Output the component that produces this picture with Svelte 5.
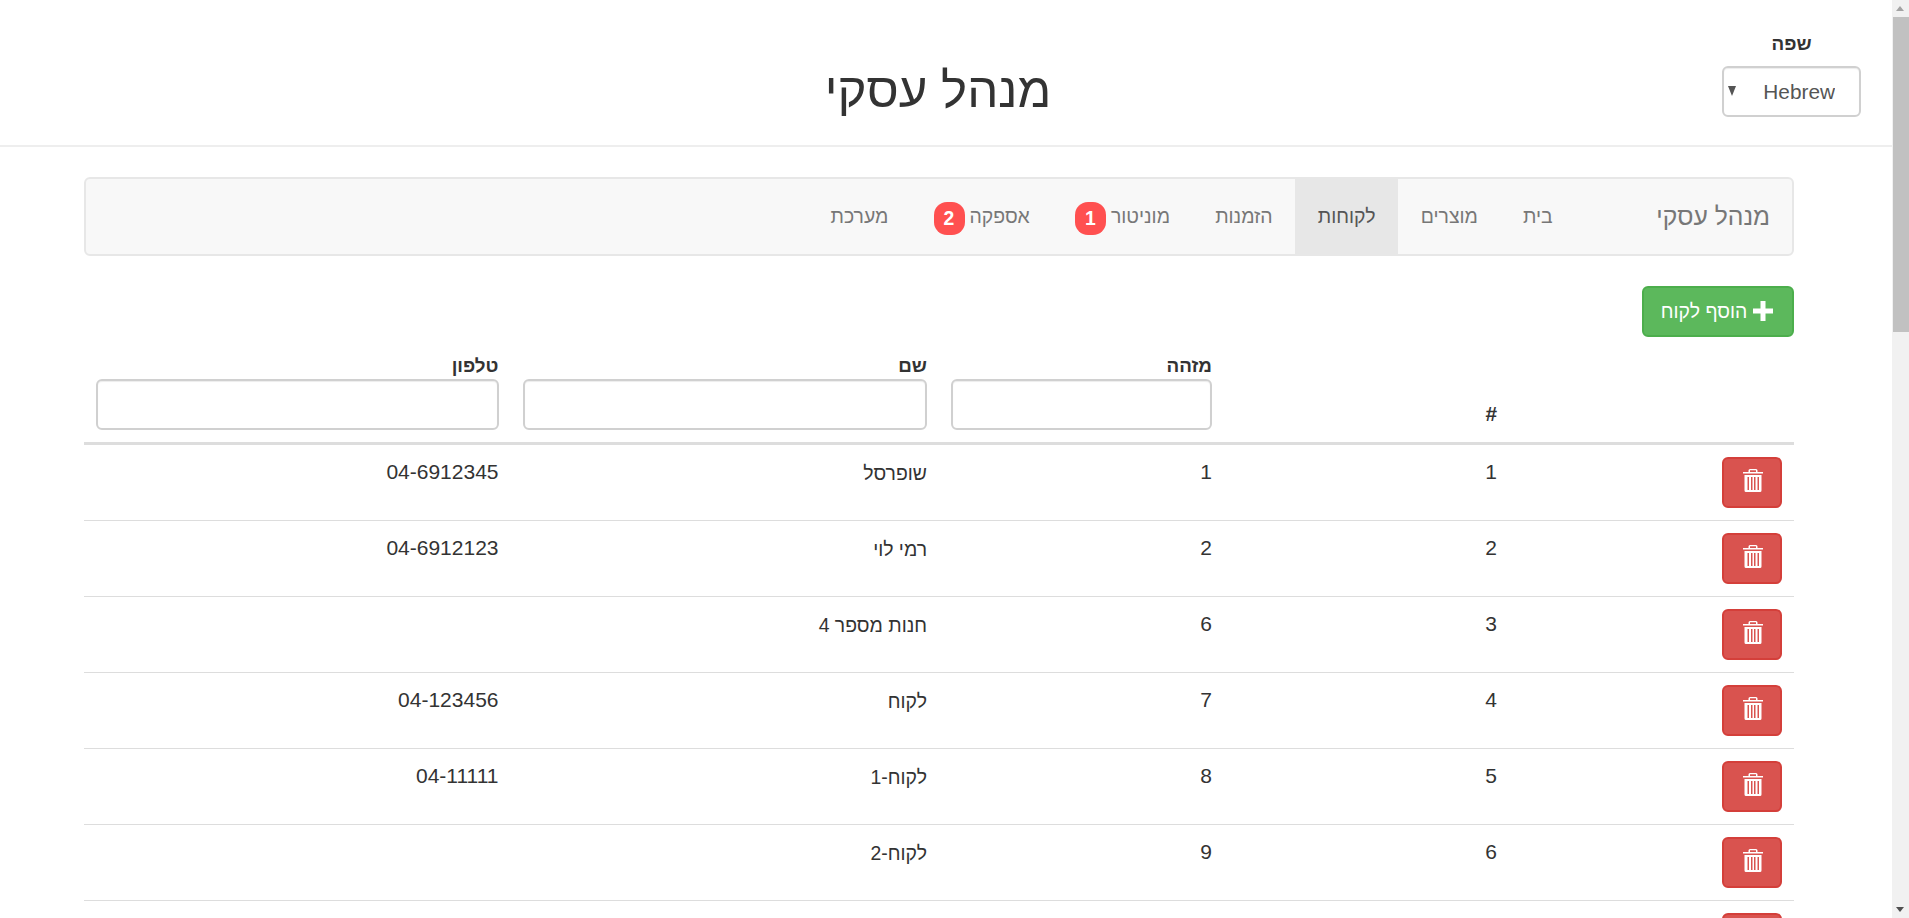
<script>
  const navItems = [
    { label: 'בית' },
    { label: 'מוצרים' },
    { label: 'לקוחות', active: true },
    { label: 'הזמנות' },
    { label: 'מוניטור', badge: 1 },
    { label: 'אספקה', badge: 2 },
    { label: 'מערכת' }
  ];
  const rows = [
    { n: 1, id: 1, name: 'שופרסל', phone: '04-6912345' },
    { n: 2, id: 2, name: 'רמי לוי', phone: '04-6912123' },
    { n: 3, id: 6, name: 'חנות מספר 4', phone: '' },
    { n: 4, id: 7, name: 'לקוח', phone: '04-123456' },
    { n: 5, id: 8, name: 'לקוח-1', phone: '04-11111' },
    { n: 6, id: 9, name: 'לקוח-2', phone: '' },
    { n: '', id: '', name: '', phone: '' }
  ];
</script>

<div class="page">
  <header class="top">
    <div class="lang">
      <label for="lang-select">שפה</label>
      <div class="select-wrap">
        <select id="lang-select"><option>Hebrew</option></select>
        <span class="arrow"></span>
      </div>
    </div>
    <h1>מנהל עסקי</h1>
  </header>

  <main class="container">
    <nav class="navbar">
      <a class="brand" href="#top">מנהל עסקי</a>
      <ul>
        {#each navItems as item}
          <li class:active={item.active}>
            <a href="#top">{item.label}{#if item.badge}<span class="badge">{item.badge}</span>{/if}</a>
          </li>
        {/each}
      </ul>
    </nav>

    <button class="btn add">
      <svg class="plus" viewBox="0 0 20 20" width="20" height="20" aria-hidden="true">
        <path d="M7.5 0h5v7.5H20v5h-7.5V20h-5v-7.5H0v-5h7.5z" fill="#fff" />
      </svg>
      הוסף לקוח
    </button>

    <table>
      <colgroup>
        <col class="c6" /><col class="c6" /><col class="c6" /><col class="c4a" /><col class="c4b" />
      </colgroup>
      <thead>
        <tr>
          <th></th>
          <th class="hash">#</th>
          <th><span class="th-label">מזהה</span><input aria-label="מזהה" /></th>
          <th><span class="th-label">שם</span><input aria-label="שם" /></th>
          <th><span class="th-label">טלפון</span><input aria-label="טלפון" /></th>
        </tr>
      </thead>
      <tbody>
        {#each rows as row}
          <tr>
            <td>
              <button class="btn del" aria-label="מחק">
                <svg viewBox="0 0 20 23" width="20" height="23" aria-hidden="true">
                  <path fill="#fff" fill-rule="evenodd" d="M7 0h6a1.500 1.500 0 0 1 1.500 1.500V3H20v1.600H0V3h5.500V1.500A1.500 1.500 0 0 1 7 0zM7 1.300v1.700h6V1.300zM1.500 6H18.500V21.500A1.500 1.500 0 0 1 17 23H3a1.500 1.500 0 0 1-1.500-1.500zM4.500 8v13H6V8zM8 8v13h1.500V8zM11 8v13h1.500V8zM14.500 8v13H16V8z" />
                </svg>
              </button>
            </td>
            <td>{row.n}</td>
            <td>{row.id}</td>
            <td>{row.name}</td>
            <td>{row.phone}</td>
          </tr>
        {/each}
      </tbody>
    </table>
  </main>

  <div class="scrollbar" aria-hidden="true">
    <span class="up"></span>
    <span class="thumb"></span>
    <span class="down"></span>
  </div>
</div>

<style>
  :global(body) {
    margin: 0;
    background: #fff;
    overflow: hidden;
  }
  .page {
    position: relative;
    width: 1909px;
    height: 918px;
    overflow: hidden;
    direction: rtl;
    font-family: "Liberation Sans", Arial, sans-serif;
    font-size: 19.4px;
    line-height: 1.43;
    color: #333;
    padding-right: 17px;
    box-sizing: border-box;
  }
  .top {
    display: flex;
    height: 147px;
    box-sizing: border-box;
    border-bottom: 2px solid #eee;
    padding-right: 31px;
  }
  .lang {
    width: 139px;
    padding-top: 30px;
    flex: none;
    text-align: center;
    box-sizing: border-box;
  }
  .lang label {
    display: block;
    font-weight: 700;
    font-size: 18.8px;
    height: 36px;
    line-height: 28px;
  }
  .select-wrap {
    position: relative;
    height: 51px;
  }
  select {
    appearance: none;
    -webkit-appearance: none;
    display: block;
    width: 100%;
    height: 51px;
    background: #fff;
    border: 2px solid #d0d0d0;
    border-radius: 6px;
    box-sizing: border-box;
    padding: 0 24px 0 0;
    font: inherit;
    font-size: 20.8px;
    color: #555;
    direction: rtl;
    box-shadow: inset 0 1px 1px rgba(0, 0, 0, 0.075);
  }
  .arrow {
    position: absolute;
    left: 6px;
    top: 20px;
    border-style: solid;
    border-width: 10px 4.5px 0;
    border-color: #555 transparent transparent;
  }
  h1 {
    flex: 1;
    margin: 0;
    padding: 63px 0 0 154px;
    text-align: center;
    font-size: 49.2px;
    font-weight: 500;
    line-height: 1.1;
    color: #333;
  }
  .container {
    display: block;
    width: 1710px;
    margin: 30px 98px 0 0;
  }
  .navbar {
    display: flex;
    height: 79px;
    box-sizing: border-box;
    background: #f8f8f8;
    border: 2px solid #e7e7e7;
    border-radius: 6px;
  }
  .brand {
    padding: 0 22px 0 81px;
    color: #777;
    text-decoration: none;
    font-size: 24.7px;
    line-height: 75px;
  }
  ul {
    display: flex;
    list-style: none;
    margin: 0;
    padding: 0;
  }
  li a {
    display: flex;
    align-items: center;
    gap: 5px;
    height: 75px;
    padding: 0 22.6px;
    color: #777;
    text-decoration: none;
    line-height: 75px;
  }
  li.active a {
    background: #e7e7e7;
    color: #555;
  }
  .badge {
    display: block;
    width: 31px;
    height: 33px;
    margin-top: 3px;
    border-radius: 13px;
    background: #ff5050;
    color: #fff;
    font-weight: 700;
    text-align: center;
    line-height: 33px;
  }
  .btn {
    display: flex;
    align-items: center;
    justify-content: center;
    box-sizing: border-box;
    height: 51px;
    border-radius: 6px;
    border-width: 2px;
    border-style: solid;
    color: #fff;
    font: inherit;
    padding: 0;
    direction: rtl;
  }
  .add {
    width: 152px;
    gap: 6px;
    margin-top: 30px;
    padding-right: 2px;
    background: #5cb85c;
    border-color: #4cae4c;
  }
  .plus {
    margin-top: -2px;
  }
  .del {
    width: 60px;
    background: #d9534f;
    border-color: #d43f3a;
  }
  .del svg {
    margin: -5px 0 0 2px;
  }
  table {
    width: 1710px;
    margin-top: 12px;
    table-layout: fixed;
    border-collapse: collapse;
  }
  .c6 { width: 285px; }
  .c4a { width: 428.5px; }
  .c4b { width: 426.5px; }
  th {
    padding: 0 12px 12px;
    border-bottom: 3px solid #ddd;
    text-align: right;
    vertical-align: bottom;
    font-weight: 700;
    font-size: 18.8px;
    line-height: 30px;
  }
  .th-label {
    display: block;
    line-height: 33px;
    height: 30px;
  }
  .hash {
    font-size: 20.8px;
    line-height: 26px;
    padding-bottom: 15px;
  }
  input {
    display: block;
    width: 100%;
    height: 51px;
    box-sizing: border-box;
    border: 2px solid #d0d0d0;
    border-radius: 6px;
    background: #fff;
    box-shadow: inset 0 1px 1px rgba(0, 0, 0, 0.075);
  }
  td {
    height: 75px;
    box-sizing: border-box;
    padding: 12px;
    border-bottom: 1.5px solid #ddd;
    vertical-align: top;
    font-size: 21px;
    line-height: 29px;
    color: #333;
  }
  td:nth-child(4) {
    font-size: 19.4px;
    padding-top: 14px;
  }
  .scrollbar {
    position: absolute;
    top: 0;
    right: 0;
    width: 17px;
    height: 918px;
    background: #f1f1f1;
  }
  .thumb {
    position: absolute;
    top: 17px;
    left: 1px;
    right: 0;
    height: 315px;
    background: #c1c1c1;
  }
  .up, .down {
    position: absolute;
    left: 4px;
    border-style: solid;
    border-color: transparent;
  }
  .up {
    top: 6px;
    border-width: 0 4.500px 5px;
    border-bottom-color: #a3a3a3;
  }
  .down {
    bottom: 6px;
    border-width: 5px 4.500px 0;
    border-top-color: #505050;
  }
</style>
